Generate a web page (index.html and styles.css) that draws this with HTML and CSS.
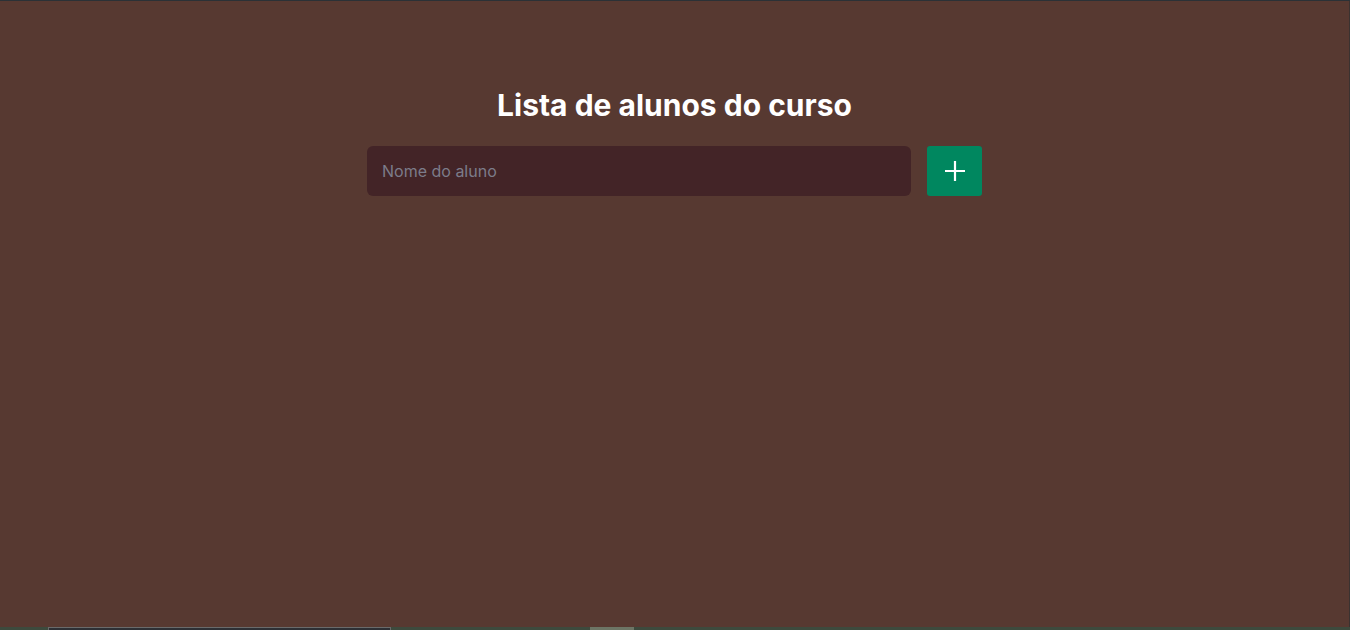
FILE: index.html
```html
<!DOCTYPE html>
<html lang="pt-BR">
<head>
<meta charset="utf-8">
<title>Lista de alunos do curso</title>
<link rel="stylesheet" href="styles.css">
</head>
<body>
<div class="topline"></div>
<main class="page">
  <div class="container">
    <h1 class="title">Lista de alunos do curso</h1>
    <form class="add-form">
      <input class="name-input" type="text" placeholder="Nome do aluno">
      <button class="add-btn" type="button" aria-label="Adicionar">
        <svg width="22" height="22" viewBox="0 0 22 22" fill="none" stroke="#ffffff" stroke-width="2.2"><path d="M11 1v20M1 11h20"/></svg>
      </button>
    </form>
  </div>
</main>
<div class="bottombar">
  <div class="bb-gap1"></div>
  <div class="bb-tab"></div>
  <div class="bb-gap2"></div>
  <div class="bb-thumb"></div>
</div>
</body>
</html>
```
FILE: styles.css
```css
* { box-sizing: border-box; }
html, body { margin: 0; padding: 0; height: 100%; }
body {
  display: flex;
  flex-direction: column;
  height: 630px;
  overflow: hidden;
  background: #573931;
  font-family: Inter, "Noto Sans", sans-serif;
}
.topline { height: 1px; background: #2b3136; flex: none; }
.page {
  flex: 1;
  border-right: 1px solid #3a3230;
  display: flex;
  justify-content: center;
}
.container {
  width: 615px;
  padding-top: 85px;
  display: flex;
  flex-direction: column;
  align-items: center;
}
.title {
  margin: 0;
  color: #ffffff;
  font-size: 30px;
  font-weight: 700;
  line-height: 38px;
}
.add-form {
  margin-top: 22px;
  display: flex;
  gap: 16px;
  width: 100%;
}
.name-input {
  flex: 1;
  height: 50px;
  border: none;
  border-radius: 6px;
  background: #432427;
  padding: 0 15px;
  font-family: Inter, "Noto Sans", sans-serif;
  font-size: 16px;
  color: #e1e1e6;
  outline: none;
}
.name-input::placeholder { color: #7c7c8a; }
.add-btn {
  width: 55px;
  height: 50px;
  border: none;
  border-radius: 3px;
  background: #00875f;
  display: flex;
  align-items: center;
  justify-content: center;
  padding: 0;
}
.bottombar {
  height: 3px;
  flex: none;
  background: #3d4a3d;
  display: flex;
}
.bb-gap1 { width: 48px; }
.bb-tab { width: 343px; background: #2e3035; border-top: 1px solid #6a6a6a; border-left: 1px solid #6a6a6a; border-right: 1px solid #6a6a6a; }
.bb-gap2 { width: 199px; }
.bb-thumb { width: 44px; background: #6d7565; }
```
